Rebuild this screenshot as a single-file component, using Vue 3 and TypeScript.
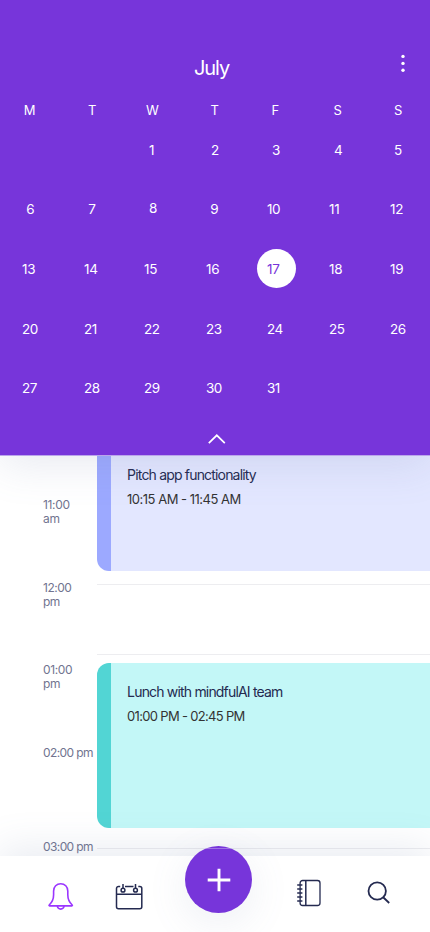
<script setup lang="ts">
interface Hour {
  clock: string
  meridiem: string
  wrapped: boolean
}

const weekdays: string[] = ['M', 'T', 'W', 'T', 'F', 'S', 'S']
const leadingBlanks = 2
const days: number[] = Array.from({ length: 31 }, (_, i) => i + 1)
const selectedDay = 17

const hours: Hour[] = [
  { clock: '11:00', meridiem: 'am', wrapped: true },
  { clock: '12:00', meridiem: 'pm', wrapped: true },
  { clock: '01:00', meridiem: 'pm', wrapped: true },
  { clock: '02:00', meridiem: 'pm', wrapped: false },
  { clock: '03:00', meridiem: 'pm', wrapped: false },
]
</script>

<template>
  <main class="screen">
    <header class="calendar">
      <div class="title-row">
        <h1 class="month">July</h1>
        <button class="more" aria-label="More options">
          <svg width="6" height="20" viewBox="0 0 6 20" fill="#fff">
            <circle cx="3" cy="3.4" r="1.7" />
            <circle cx="3" cy="10.4" r="1.7" />
            <circle cx="3" cy="17.3" r="1.7" />
          </svg>
        </button>
      </div>
      <div class="weekdays">
        <span v-for="(name, i) in weekdays" :key="i" class="weekday">{{ name }}</span>
      </div>
      <div class="days">
        <span v-for="n in leadingBlanks" :key="'blank' + n"></span>
        <span
          v-for="day in days"
          :key="day"
          class="day"
          :class="{
            single: day < 10,
            first: day < 6,
            teen: day > 10 && day < 20,
            raised: day === 8,
            selected: day === selectedDay,
          }"
        >{{ day }}</span>
      </div>
      <button class="collapse" aria-label="Collapse calendar">
        <svg width="20" height="12" viewBox="0 0 20 12" fill="none" stroke="#fff" stroke-width="1.7">
          <path d="M1.8 10.2 9.8 2.3l8 7.9" />
        </svg>
      </button>
    </header>

    <section class="timeline">
      <div class="hours">
        <div v-for="hour in hours" :key="hour.clock" class="hour" :class="{ wide: !hour.wrapped }">
          {{ hour.clock }}<br v-if="hour.wrapped" />{{ hour.wrapped ? '' : ' ' }}{{ hour.meridiem }}
        </div>
      </div>
      <div class="slots">
        <article class="event pitch">
          <h2>Pitch app functionality</h2>
          <p>10:15 AM - 11:45 AM</p>
        </article>
        <hr class="rule noon" />
        <hr class="rule one" />
        <article class="event lunch">
          <h2>Lunch with mindfulAI team</h2>
          <p>01:00 PM - 02:45 PM</p>
        </article>
        <hr class="rule three" />
      </div>
    </section>

    <nav class="tabs">
      <button class="tab bell" aria-label="Notifications">
        <svg width="28" height="30" viewBox="0 0 28 30" fill="none" stroke="#9b37ff" stroke-width="1.6" stroke-linejoin="round">
          <path d="M2.2 24c2.6-2.3 4.4-5.7 4.4-10.2V10c0-4.2 3-7.3 7.1-7.3s7.1 3.1 7.1 7.3v3.8c0 4.5 1.8 7.9 4.4 10.2.4.4.2.9-.3.9H2.5c-.5 0-.7-.5-.3-.9Z" />
          <path d="M10.3 25c.3 2 1.6 3.1 3.4 3.1s3.1-1.1 3.4-3.1" />
        </svg>
      </button>
      <button class="tab agenda" aria-label="Calendar">
        <svg width="28" height="28" viewBox="0 0 28 28" fill="none" stroke="#242a50" stroke-width="1.5">
          <path d="M5.2 3.5H3.5a2 2 0 0 0-2 2v18.300a2 2 0 0 0 2 2h21.300a2 2 0 0 0 2-2V5.500a2 2 0 0 0-2-2h-1.500M10 3.500h8.500M1.500 11.200h25.300" />
          <path d="M8 1v4.500M20.500 1v4.500" />
          <circle cx="8" cy="7.200" r="1.900" />
          <circle cx="20.500" cy="7.200" r="1.900" />
        </svg>
      </button>
      <button class="add" aria-label="Add event">
        <svg width="24" height="24" viewBox="0 0 24 24" stroke="#fff" stroke-width="2.9">
          <path d="M12 .7v22.600M.7 12h22.600" />
        </svg>
      </button>
      <button class="tab notes" aria-label="Notebook">
        <svg width="25" height="28" viewBox="0 0 25 28" fill="none" stroke="#242a50" stroke-width="1.3">
          <rect x="3.100" y="1.500" width="19.900" height="25" rx="2.500" />
          <path d="M8.800 1.500v25" stroke-width="1.500" />
          <path d="M.2 6h5.200M.2 10h5.200M.2 14h5.200M.2 18h5.200M.2 22h5.200" stroke-width="1.600" />
        </svg>
      </button>
      <button class="tab search" aria-label="Search">
        <svg width="24" height="24" viewBox="0 0 24 24" fill="none" stroke="#242a50" stroke-width="1.800">
          <circle cx="10.200" cy="10" r="8.700" />
          <path d="m15.900 16 6.300 6" />
        </svg>
      </button>
    </nav>
  </main>
</template>

<style>
body {
  background: #fff;
}
</style>

<style scoped>
.screen {
  display: flex;
  flex-direction: column;
  width: 430px;
  height: 932px;
  overflow: hidden;
  background: #fff;
  font-family: Inter, "Liberation Sans", sans-serif;
  color: #242a50;
}
button {
  display: block;
  padding: 0;
  border: 0;
  background: none;
}
svg {
  display: block;
}
.calendar {
  position: relative;
  z-index: 2;
  box-sizing: border-box;
  flex: 0 0 455px;
  padding-top: 53px;
  background: #7735da;
  box-shadow: 0 1px 0 #bba5eb, 0 10px 40px rgba(110, 125, 165, 0.16);
  color: #fff;
}
.title-row {
  display: grid;
  grid-template-columns: 194px 206px 1fr;
  height: 47px;
}
.month {
  grid-column: 2;
  margin: 0;
  padding-top: 2px;
  font-size: 20px;
  font-weight: 400;
  line-height: 26px;
  letter-spacing: -1.100px;
}
.more {
  height: 20px;
}
.weekdays,
.days {
  display: grid;
  grid-template-columns: 62px 60px 62px 61px 62px 61px 40px;
  padding-left: 22px;
}
.weekday {
  padding-left: 4.500px;
  font-size: 13px;
  line-height: 20px;
}
.weekday:nth-child(2),
.weekday:last-child {
  padding-left: 4px;
}
.weekday:first-child {
  padding-left: 1.800px;
}
.weekday:nth-child(3) {
  padding-left: 2px;
}
.days {
  grid-template-rows: 59px 60px 60px 59px 50px;
  padding-top: 10px;
}
.day {
  display: flex;
  align-items: flex-start;
  padding-top: 10px;
  font-size: 13.500px;
  line-height: 20px;
  letter-spacing: -0.600px;
}
.teen {
  letter-spacing: -0.200px;
}
.single {
  padding-left: 4.300px;
}
.first {
  padding-left: 5px;
}
.first:nth-child(7) {
  padding-left: 4px;
}
.raised {
  padding-top: 9px;
  padding-left: 5px;
}
.selected {
  box-sizing: border-box;
  width: 39px;
  height: 39px;
  margin: 0 0 0 -10px;
  padding: 10px 0 0 10px;
  border-radius: 50%;
  background: #fff;
  color: #7735da;
}
.collapse {
  position: absolute;
  left: 207px;
  top: 433px;
}
.timeline {
  display: grid;
  grid-template-columns: 54.400px 332.600px;
  flex: 0 0 401px;
  padding-left: 43px;
  overflow: hidden;
}
.hours {
  padding-top: 43px;
}
.hour {
  height: 83px;
  font-size: 12px;
  line-height: 14px;
  letter-spacing: -0.350px;
  white-space: nowrap;
  color: #71748f;
}
.hour:nth-child(2) {
  height: 82px;
  letter-spacing: -0.500px;
}
.hour:nth-child(4) {
  height: 94px;
}
.wide {
  letter-spacing: -0.600px;
}
.event {
  box-sizing: border-box;
  padding-left: 15.700px;
  border-left: 14px solid;
  border-radius: 12px 0 0 12px;
}
.event h2,
.event p {
  margin: 0;
  font-weight: 400;
  line-height: 20px;
  white-space: nowrap;
}
.event h2 {
  font-size: 14px;
  letter-spacing: -0.820px;
}
.event p {
  margin-top: 4px;
  font-size: 13px;
  letter-spacing: -0.500px;
  color: #333;
}
.pitch {
  height: 116.400px;
  padding-top: 10px;
  border-top-left-radius: 0;
  border-left-color: #9ca9ff;
  background: #e3e7ff;
}
.lunch {
  height: 165px;
  padding-top: 18.500px;
  border-left-color: #52d5d4;
  background: #c3f7f7;
}
.lunch p {
  letter-spacing: -0.680px;
}
.rule {
  height: 1px;
  margin: 0;
  border: 0;
  background: #ededf0;
}
.noon {
  margin-top: 12.600px;
}
.one {
  margin: 69px 0 8.400px;
}
.three {
  margin-top: 19.600px;
}
.tabs {
  position: relative;
  z-index: 3;
  display: grid;
  grid-template-columns: 68px 70px 111.500px 70.500px 40px;
  align-items: start;
  justify-items: start;
  flex: 1;
  padding-left: 47px;
  background: #fff;
  box-shadow: 0 -8px 38px rgba(110, 125, 165, 0.150);
}
.bell {
  padding-top: 25px;
}
.agenda {
  padding-top: 27px;
}
.notes {
  padding-top: 23px;
}
.search {
  padding-top: 25px;
}
.add {
  display: grid;
  place-items: center;
  width: 67px;
  height: 67px;
  margin-top: -10px;
  border-radius: 50%;
  background: linear-gradient(transparent 2px, rgba(255, 255, 255, 0.300) 2px, rgba(255, 255, 255, 0.300) 3px, transparent 3px), #7735da;
  box-shadow: 0 10px 40px rgba(110, 125, 165, 0.120);
}
</style>
